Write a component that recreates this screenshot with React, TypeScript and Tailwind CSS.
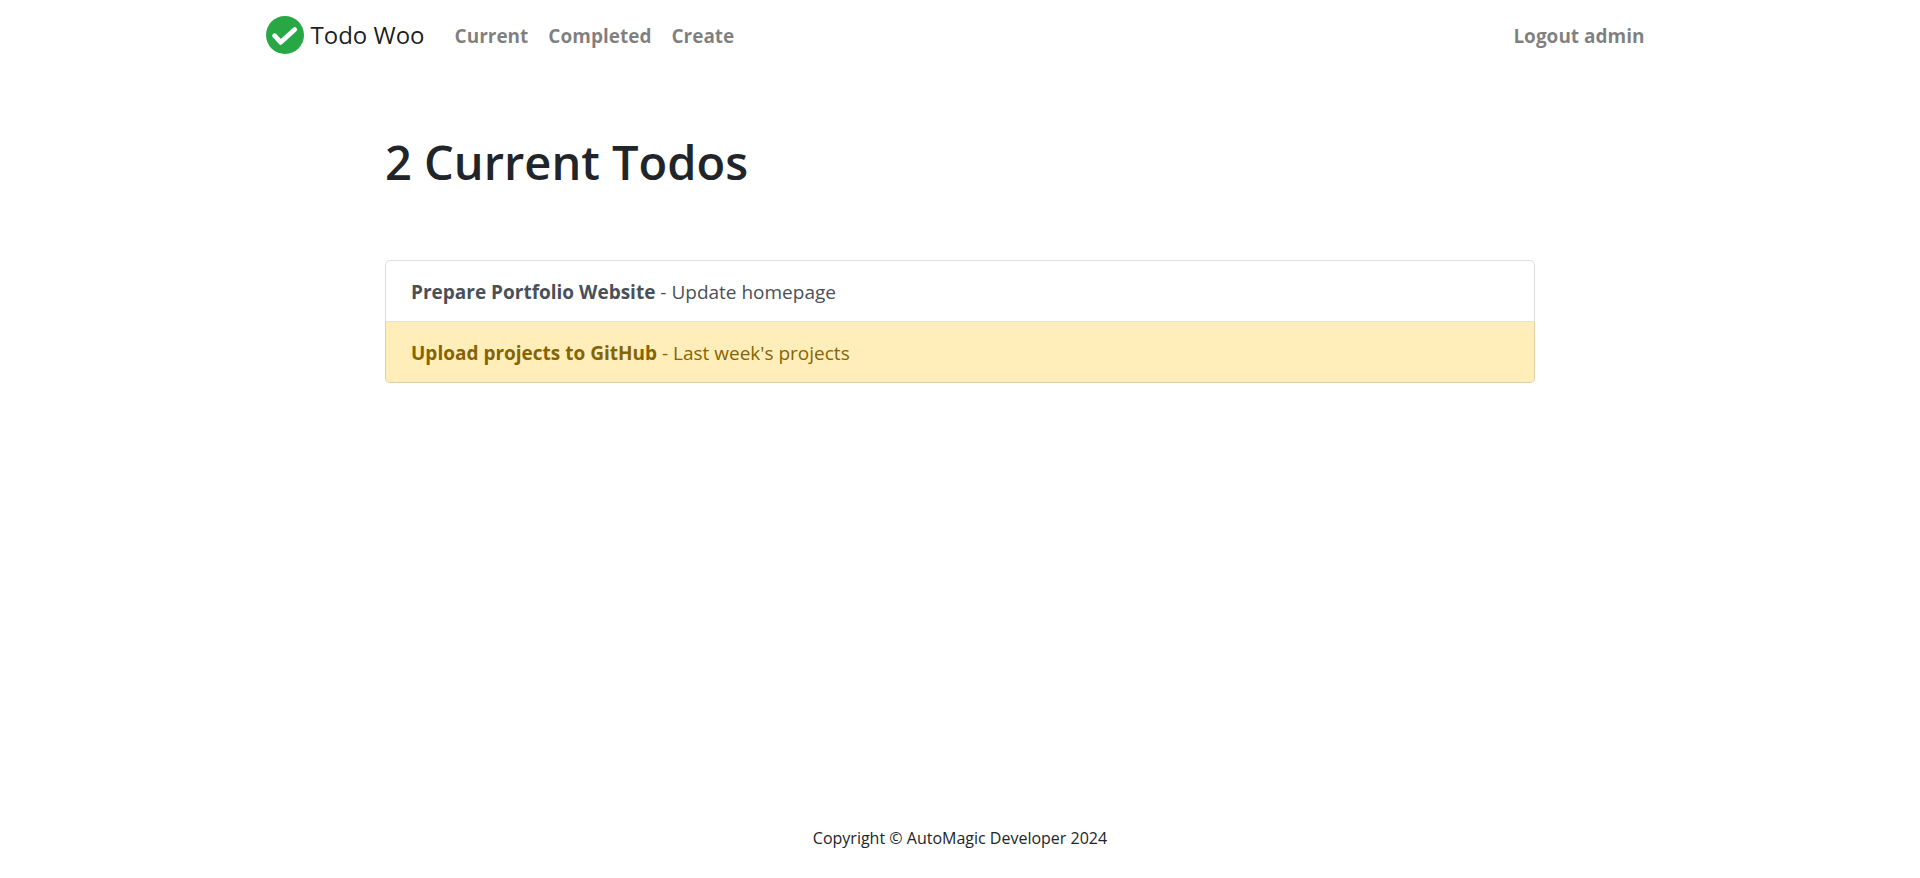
const navLink = "px-[10px] pt-[3px] text-[19px] font-bold text-black/50 no-underline hover:text-black/70";

const todos = [
  { title: "Prepare Portfolio Website", memo: "Update homepage", important: false },
  { title: "Upload projects to GitHub", memo: "Last week's projects", important: true },
];

export default function App() {
  return (
    <div className="flex min-h-screen flex-col bg-white font-['Open_Sans',sans-serif] text-[19px] text-[#212529]">
      <nav className="mx-auto flex h-[70px] w-full max-w-[1425px] items-center px-[18px]">
        <a href="#home" className="mr-5 flex items-center gap-[7px] text-[24px] text-black/90">
          <svg viewBox="0 0 16 16" className="size-[38px] text-[#28a745]" fill="currentColor" aria-hidden="true">
            <circle cx="8" cy="8" r="8" />
            <path d="M3.6 8.3L6.2 11.1L12.1 5.7" stroke="white" strokeWidth="2" strokeLinecap="round" strokeLinejoin="round" fill="none" />
          </svg>
          Todo Woo
        </a>
        <a href="#current" className={navLink}>Current</a>
        <a href="#completed" className={navLink}>Completed</a>
        <a href="#create" className={navLink}>Create</a>
        <a href="#logout" className={`${navLink} ml-auto`}>Logout admin</a>
      </nav>
      <main className="mx-auto mt-[62px] w-full max-w-[1150px] flex-1">
        <h1 className="text-[47px] leading-[60px] font-semibold">2 Current Todos</h1>
        <ul className="mt-[68px]">
          {todos.map((todo) => (
            <li key={todo.title} className="group">
              <a
                href="#todo"
                className={`block border border-t-0 border-black/[0.125] px-[25px] pt-[16px] pb-[14px] leading-[30px] group-first:rounded-t-[5px] group-first:border-t group-last:rounded-b-[5px] ${todo.important ? "bg-[#ffeeba] text-[#856404]" : "text-[#495057]"}`}
              >
                <strong>{todo.title}</strong> - {todo.memo}
              </a>
            </li>
          ))}
        </ul>
      </main>
      <footer className="pb-7 text-center text-base">Copyright © AutoMagic Developer 2024</footer>
    </div>
  );
}
